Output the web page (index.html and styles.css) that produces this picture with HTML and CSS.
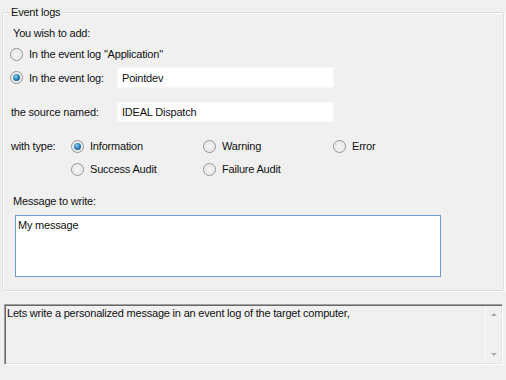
FILE: index.html
```html
<!DOCTYPE html>
<html>
<head>
<meta charset="utf-8">
<link rel="stylesheet" href="styles.css">
</head>
<body>
<fieldset class="group">
  <legend class="legend">Event logs</legend>
  <div class="row row-wish"><span class="label-wish">You wish to add:</span></div>
  <div class="row row-opt1">
    <span class="radio"></span><span class="rlabel">In the event log "Application"</span>
  </div>
  <div class="row row-opt2">
    <div class="cell-left"><span class="radio checked"></span><span class="rlabel">In the event log:</span></div>
    <div class="textbox">Pointdev</div>
  </div>
  <div class="row row-source">
    <div class="cell-left"><span class="plain">the source named:</span></div>
    <div class="textbox">IDEAL Dispatch</div>
  </div>
  <div class="types">
    <span class="type-label">with type:</span>
    <div class="opt"><span class="radio checked"></span><span class="rlabel">Information</span></div>
    <div class="opt"><span class="radio"></span><span class="rlabel">Warning</span></div>
    <div class="opt"><span class="radio"></span><span class="rlabel">Error</span></div>
    <span></span>
    <div class="opt"><span class="radio"></span><span class="rlabel">Success Audit</span></div>
    <div class="opt"><span class="radio"></span><span class="rlabel">Failure Audit</span></div>
    <span></span>
  </div>
  <div class="row row-msg"><span class="label-msg">Message to write:</span></div>
  <div class="textarea">My message</div>
</fieldset>
<div class="desc">
  <div class="desc-text">Lets write a personalized message in an event log of the target computer,</div>
  <div class="scroll">
    <span class="arrow up"></span>
    <span class="arrow down"></span>
  </div>
</div>
</body>
</html>
```
FILE: styles.css
```css
html, body {
  margin: 0;
  padding: 0;
  background: #f0f0f0;
}
body {
  font-family: "Liberation Sans", Arial, sans-serif;
  font-size: 11px;
  letter-spacing: -0.2px;
  color: #111;
  width: 506px;
  height: 380px;
  overflow: hidden;
}
.group {
  margin: 6px 2px 0 2px;
  padding: 0 0 13px 0;
  border: 1px solid #d5dfe5;
  box-shadow: inset 1px 1px 0 #fff, 1px 1px 0 #fff;
  border-radius: 2px;
  display: flex;
  flex-direction: column;
  min-inline-size: 0;
}
.legend {
  margin-left: 6px;
  padding: 0 2px;
  line-height: 13px;
  height: 13px;
}
.row {
  display: flex;
  align-items: center;
}
.row-wish {
  height: 14px;
  margin-top: 7px;
  padding-left: 10px;
}
.row-opt1 {
  height: 14px;
  margin-top: 7px;
  padding-left: 7px;
}
.row-opt2 {
  height: 19px;
  margin-top: 7px;
  padding-left: 7px;
}
.row-source {
  height: 18px;
  margin-top: 16px;
  padding-left: 8px;
}
.cell-left {
  display: flex;
  align-items: center;
  width: 108px;
}
.row-source .cell-left {
  width: 107px;
}
.radio {
  width: 11px;
  height: 11px;
  border: 1px solid #929292;
  border-radius: 50%;
  background: radial-gradient(circle at 50% 50%, #fafafa 0, #e6e6e6 55%, #d6d6d6 100%);
  box-shadow: inset 0 0 0 1px #f4f4f4;
  flex: none;
  position: relative;
}
.radio.checked::after {
  content: "";
  position: absolute;
  left: 2px;
  top: 2px;
  width: 7px;
  height: 7px;
  border-radius: 50%;
  background: radial-gradient(circle at 40% 35%, #8fd0f3 0, #2f86c0 45%, #123e66 100%);
}
.rlabel {
  margin-left: 6px;
  white-space: nowrap;
}
.textbox {
  background: #fff;
  width: 211px;
  height: 100%;
  padding-left: 4px;
  display: flex;
  align-items: center;
  box-shadow: 0 0 0 1px #f7f7f7;
}
.types {
  margin-top: 18px;
  display: grid;
  grid-template-columns: 60px 132px 130px 1fr;
  grid-auto-rows: 14px;
  row-gap: 9px;
  padding-left: 8px;
  align-items: center;
}
.opt {
  display: flex;
  align-items: center;
}
.row-msg {
  height: 14px;
  margin-top: 18px;
  padding-left: 10px;
}
.textarea {
  margin-top: 7px;
  margin-left: 12px;
  width: 422px;
  padding: 3px 0 0 2px;
  box-sizing: content-box;
  border: 1px solid #6e9ccb;
  background: #fff;
  height: 57px;
}
.desc {
  margin: 13px 3px 0 4px;
  height: 59px;
  border-top: 1px solid #a0a0a0;
  border-left: 1px solid #a0a0a0;
  border-right: 1px solid #fff;
  border-bottom: 1px solid #fff;
  box-shadow: inset 1px 1px 0 #696969, inset -1px -1px 0 #e3e3e3;
  display: flex;
  background: #f0f0f0;
}
.desc-text {
  flex: 1;
  padding: 2px 0 0 2px;
  line-height: 13px;
}
.scroll {
  width: 15px;
  border-left: 1px solid #fbfbfb;
  display: flex;
  flex-direction: column;
  justify-content: space-between;
  align-items: center;
  padding: 7px 0 7px 0;
  margin: 1px 1px 1px 0;
}
.arrow {
  width: 0;
  height: 0;
  border-left: 3px solid transparent;
  border-right: 3px solid transparent;
}
.arrow.up {
  border-bottom: 3px solid #a8a8a8;
}
.arrow.down {
  border-top: 3px solid #a8a8a8;
}
```
